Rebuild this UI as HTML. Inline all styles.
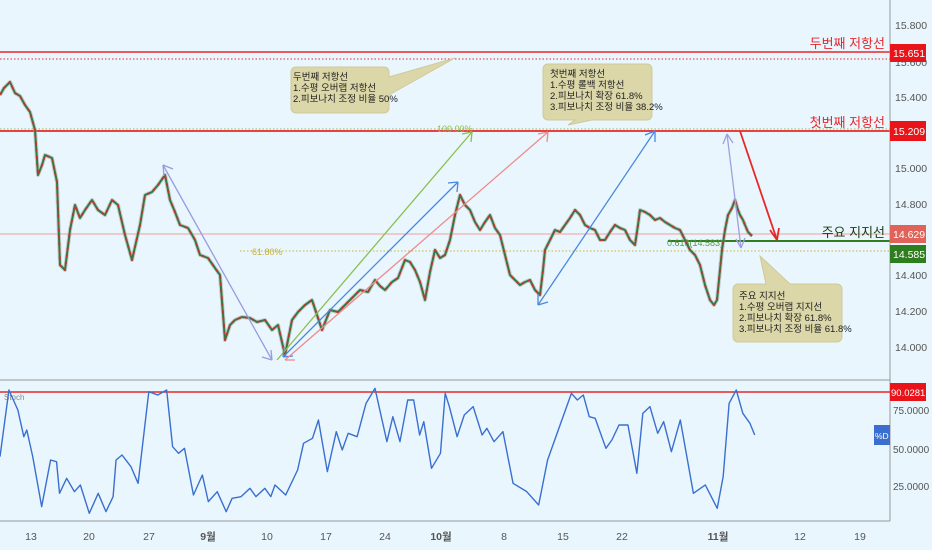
<!DOCTYPE html>
<html><head><meta charset="utf-8"><style>
html,body{margin:0;padding:0;background:#e9f6fd;}
svg{display:block;font-family:"Liberation Sans","Noto Sans CJK KR",sans-serif;}
.ax{font-size:10.5px;fill:#555;}
.ax2{font-size:10px;fill:#555;}
.cb{font-size:9.5px;fill:#222;}
</style></head><body>
<svg width="932" height="550" viewBox="0 0 932 550" xmlns="http://www.w3.org/2000/svg">
<rect width="932" height="550" fill="#e9f6fd"/>
<line x1="0" y1="52" x2="890" y2="52" stroke="#e8262a" stroke-width="1.6"/>
<line x1="0" y1="59" x2="890" y2="59" stroke="#e8262a" stroke-width="1" stroke-dasharray="1.5,2"/>
<line x1="0" y1="129" x2="890" y2="129" stroke="#8bbf4a" stroke-width="1" stroke-dasharray="1.5,2"/>
<line x1="0" y1="131" x2="890" y2="131" stroke="#e8262a" stroke-width="1.8"/>
<line x1="0" y1="234" x2="890" y2="234" stroke="#f0a0a0" stroke-width="1"/>
<line x1="240" y1="251" x2="890" y2="251" stroke="#c8b830" stroke-width="1" stroke-dasharray="1.5,2"/>
<line x1="668" y1="241" x2="890" y2="241" stroke="#2e7d1e" stroke-width="2"/>
<text x="252" y="255" font-size="9" fill="#c8b030">61.80%</text>
<text x="437" y="132" font-size="9" fill="#8bbf4a">100.00%</text>
<text x="667" y="246" font-size="9" fill="#5a9a40">0.618(14.583)</text>
<!-- price -->
<g fill="none" stroke-linejoin="round">
<polyline stroke="#9aa8a0" stroke-width="4" opacity="0.5" points="0,95 4,88 10,82 15,93 20,96 25,105 30,112 35,130 38,175 42,165 45,155 52,158 57,182 60,265 65,270 70,230 75,205 80,218 85,210 92,200 98,210 105,215 112,200 118,205 125,235 132,260 140,225 145,195 152,192 158,185 165,175 170,200 175,212 180,225 188,228 195,240 200,255 208,258 215,268 220,275 225,340 230,325 235,320 242,317 250,318 257,322 265,320 272,330 278,325 285,355 292,320 298,312 305,305 312,300 318,318 322,330 330,310 338,312 345,305 352,298 360,290 368,292 375,280 380,286 385,290 392,282 398,278 405,260 410,262 415,270 420,282 425,300 430,272 435,250 440,258 445,255 450,240 455,215 460,195 465,205 470,210 475,222 480,230 485,222 490,215 495,228 500,235 505,255 510,275 515,280 520,285 525,282 530,280 535,290 540,295 543,270 545,250 550,240 555,230 560,232 565,225 570,218 575,210 580,215 585,225 590,228 595,230 600,240 605,240 610,232 615,225 620,228 625,230 630,240 635,245 638,225 640,210 645,212 650,215 655,220 660,218 665,222 670,225 675,228 680,230 685,240 690,250 695,255 700,265 705,285 710,300 714,305 717,300 720,270 722,250 725,230 728,215 732,208 735,200 738,210 740,215 743,220 745,225 748,232 752,236"/>
<polyline stroke="#2f7a48" stroke-width="2" points="0,95 4,88 10,82 15,93 20,96 25,105 30,112 35,130 38,175 42,165 45,155 52,158 57,182 60,265 65,270 70,230 75,205 80,218 85,210 92,200 98,210 105,215 112,200 118,205 125,235 132,260 140,225 145,195 152,192 158,185 165,175 170,200 175,212 180,225 188,228 195,240 200,255 208,258 215,268 220,275 225,340 230,325 235,320 242,317 250,318 257,322 265,320 272,330 278,325 285,355 292,320 298,312 305,305 312,300 318,318 322,330 330,310 338,312 345,305 352,298 360,290 368,292 375,280 380,286 385,290 392,282 398,278 405,260 410,262 415,270 420,282 425,300 430,272 435,250 440,258 445,255 450,240 455,215 460,195 465,205 470,210 475,222 480,230 485,222 490,215 495,228 500,235 505,255 510,275 515,280 520,285 525,282 530,280 535,290 540,295 543,270 545,250 550,240 555,230 560,232 565,225 570,218 575,210 580,215 585,225 590,228 595,230 600,240 605,240 610,232 615,225 620,228 625,230 630,240 635,245 638,225 640,210 645,212 650,215 655,220 660,218 665,222 670,225 675,228 680,230 685,240 690,250 695,255 700,265 705,285 710,300 714,305 717,300 720,270 722,250 725,230 728,215 732,208 735,200 738,210 740,215 743,220 745,225 748,232 752,236"/>
<polyline stroke="#b83a2b" stroke-width="2" stroke-dasharray="3,4" points="0,95 4,88 10,82 15,93 20,96 25,105 30,112 35,130 38,175 42,165 45,155 52,158 57,182 60,265 65,270 70,230 75,205 80,218 85,210 92,200 98,210 105,215 112,200 118,205 125,235 132,260 140,225 145,195 152,192 158,185 165,175 170,200 175,212 180,225 188,228 195,240 200,255 208,258 215,268 220,275 225,340 230,325 235,320 242,317 250,318 257,322 265,320 272,330 278,325 285,355 292,320 298,312 305,305 312,300 318,318 322,330 330,310 338,312 345,305 352,298 360,290 368,292 375,280 380,286 385,290 392,282 398,278 405,260 410,262 415,270 420,282 425,300 430,272 435,250 440,258 445,255 450,240 455,215 460,195 465,205 470,210 475,222 480,230 485,222 490,215 495,228 500,235 505,255 510,275 515,280 520,285 525,282 530,280 535,290 540,295 543,270 545,250 550,240 555,230 560,232 565,225 570,218 575,210 580,215 585,225 590,228 595,230 600,240 605,240 610,232 615,225 620,228 625,230 630,240 635,245 638,225 640,210 645,212 650,215 655,220 660,218 665,222 670,225 675,228 680,230 685,240 690,250 695,255 700,265 705,285 710,300 714,305 717,300 720,270 722,250 725,230 728,215 732,208 735,200 738,210 740,215 743,220 745,225 748,232 752,236"/>
</g>
<!-- arrows -->
<g fill="none" stroke-width="1.3">
<line x1="163" y1="165" x2="272" y2="360" stroke="#9a9ae0"/>
<path d="M163,165 l10,4 M163,165 l1,11 M272,360 l-10,-3 M272,360 l-1,-10" stroke="#9a9ae0"/>
<line x1="277" y1="360" x2="472" y2="132" stroke="#8bbf4a"/>
<path d="M472,132 l-10,2 M472,132 l-1,10" stroke="#8bbf4a"/>
<line x1="283" y1="357" x2="458" y2="182" stroke="#4a88e0"/>
<path d="M458,182 l-10,1 M458,182 l-1,10 M283,357 l10,-1 M283,357 l1,-10" stroke="#4a88e0"/>
<line x1="285" y1="360" x2="548" y2="132" stroke="#f08a8a"/>
<path d="M548,132 l-10,2 M548,132 l-1,10 M285,360 l10,0" stroke="#f08a8a"/>
<line x1="538" y1="305" x2="655" y2="131" stroke="#4a88e0"/>
<path d="M655,131 l-10,4 M655,131 l0,11 M538,305 l10,-3 M538,305 l0,-11" stroke="#4a88e0"/>
<line x1="727" y1="134" x2="741" y2="248" stroke="#a0a0e0"/>
<path d="M727,134 l-4,10 M727,134 l6,9 M741,248 l-5,-9 M741,248 l4,-10" stroke="#a0a0e0"/>
<line x1="740" y1="131" x2="777" y2="240" stroke="#e8262a" stroke-width="1.8"/>
<path d="M777,240 l-7,-10 M777,240 l2,-12" stroke="#e8262a" stroke-width="1.8"/>
</g>
<!-- callouts -->
<g fill="#dcd7a8" stroke="#cfc99a">
<path d="M296,67 h88 a5,5 0 0 1 5,5 v5 L455,58 L389,95 v13 a5,5 0 0 1 -5,5 h-88 a5,5 0 0 1 -5,-5 v-36 a5,5 0 0 1 5,-5z"/>
<path d="M548,64 h99 a5,5 0 0 1 5,5 v46 a5,5 0 0 1 -5,5 h-55 L568,125 L575,120 h-27 a5,5 0 0 1 -5,-5 v-46 a5,5 0 0 1 5,-5z"/>
<path d="M738,284 h28 L760,256 L790,284 h47 a5,5 0 0 1 5,5 v48 a5,5 0 0 1 -5,5 h-99 a5,5 0 0 1 -5,-5 v-48 a5,5 0 0 1 5,-5z"/>
</g>
<text class="cb" x="293" y="80">두번째 저항선</text>
<text class="cb" x="293" y="91">1.수평 오버랩 저항선</text>
<text class="cb" x="293" y="102">2.피보나치 조정 비율 50%</text>
<text class="cb" x="550" y="77">첫번째 저항선</text>
<text class="cb" x="550" y="88">1.수평 롤백 저항선</text>
<text class="cb" x="550" y="99">2.피보나치 확장 61.8%</text>
<text class="cb" x="550" y="110">3.피보나치 조정 비율 38.2%</text>
<text class="cb" x="739" y="299">주요 지지선</text>
<text class="cb" x="739" y="310">1.수평 오버랩 지지선</text>
<text class="cb" x="739" y="321">2.피보나치 확장 61.8%</text>
<text class="cb" x="739" y="332">3.피보나치 조정 비율 61.8%</text>
<text x="885" y="48" font-size="13" fill="#e8262a" text-anchor="end">두번째 저항선</text>
<text x="885" y="127" font-size="13" fill="#e8262a" text-anchor="end">첫번째 저항선</text>
<text x="885" y="237" font-size="13" fill="#1a3a10" text-anchor="end">주요 지지선</text>
<!-- price axis -->
<line x1="890" y1="0" x2="890" y2="521" stroke="#999" stroke-width="1"/>
<g class="ax">
<text x="895" y="29">15.800</text>
<text x="895" y="66">15.600</text>
<text x="895" y="101">15.400</text>
<text x="895" y="172">15.000</text>
<text x="895" y="208">14.800</text>
<text x="895" y="279">14.400</text>
<text x="895" y="315">14.200</text>
<text x="895" y="351">14.000</text>
</g>
<g class="ax2">
<text x="893" y="414">75.0000</text>
<text x="893" y="453">50.0000</text>
<text x="893" y="490">25.0000</text>
</g>
<rect x="890" y="44" width="36" height="18" fill="#e8141a"/>
<text x="893" y="57" font-size="10.5" fill="#fff">15.651</text>
<rect x="890" y="121" width="36" height="20" fill="#e8141a"/>
<text x="893" y="135" font-size="10.5" fill="#fff">15.209</text>
<rect x="890" y="225" width="36" height="18" fill="#e06258"/>
<text x="893" y="238" font-size="10.5" fill="#fff">14.629</text>
<rect x="890" y="245" width="36" height="18" fill="#2e7d1e"/>
<text x="893" y="258" font-size="10.5" fill="#fff">14.585</text>
<line x1="0" y1="380" x2="890" y2="380" stroke="#999" stroke-width="1"/>
<line x1="0" y1="521" x2="890" y2="521" stroke="#999" stroke-width="1"/>
<!-- stoch -->
<line x1="0" y1="392" x2="890" y2="392" stroke="#e8262a" stroke-width="1.6"/>
<text x="4" y="400" font-size="8" fill="#888">Stoch</text>
<rect x="890" y="383" width="36" height="18" fill="#e8141a"/>
<text x="891" y="396" font-size="9.5" fill="#fff">90.0281</text>
<rect x="874" y="425" width="16" height="20" fill="#3a6fd0"/>
<text x="875" y="439" font-size="8.5" fill="#fff">%D</text>
<g transform="translate(0,370) scale(0.5952,0.3333)">
<polyline fill="none" stroke="#3a6fd0" stroke-width="1.4" vector-effect="non-scaling-stroke" stroke-linejoin="round" points="0,260 15,60 30,120 40,200 45,180 55,260 70,410 85,270 95,275 100,370 112,325 125,365 135,345 150,430 165,370 178,425 190,380 195,270 205,255 220,290 232,340 250,65 265,75 280,60 290,230 300,250 310,235 325,375 340,315 350,395 365,365 380,425 390,385 405,380 420,355 430,380 445,355 455,380 462,345 480,375 500,300 510,220 525,205 535,150 550,305 565,185 575,240 585,190 600,200 615,100 630,55 650,215 660,140 672,215 685,90 695,90 705,195 712,155 725,295 740,250 748,70 755,110 768,200 780,135 795,110 810,195 818,175 830,215 845,185 862,340 885,365 905,405 920,270 940,170 960,70 970,90 980,75 990,140 1000,145 1018,235 1028,210 1040,165 1055,165 1070,310 1080,130 1092,110 1105,190 1115,155 1128,245 1143,150 1165,370 1185,345 1205,415 1215,320 1225,100 1237,60 1248,130 1260,160 1268,195"/>
</g>
<g class="ax" text-anchor="middle">
<text x="31" y="540">13</text>
<text x="89" y="540">20</text>
<text x="149" y="540">27</text>
<text x="208" y="540" font-weight="bold">9월</text>
<text x="267" y="540">10</text>
<text x="326" y="540">17</text>
<text x="385" y="540">24</text>
<text x="441" y="540" font-weight="bold">10월</text>
<text x="504" y="540">8</text>
<text x="563" y="540">15</text>
<text x="622" y="540">22</text>
<text x="718" y="540" font-weight="bold">11월</text>
<text x="800" y="540">12</text>
<text x="860" y="540">19</text>
</g>
</svg>
</body></html>
